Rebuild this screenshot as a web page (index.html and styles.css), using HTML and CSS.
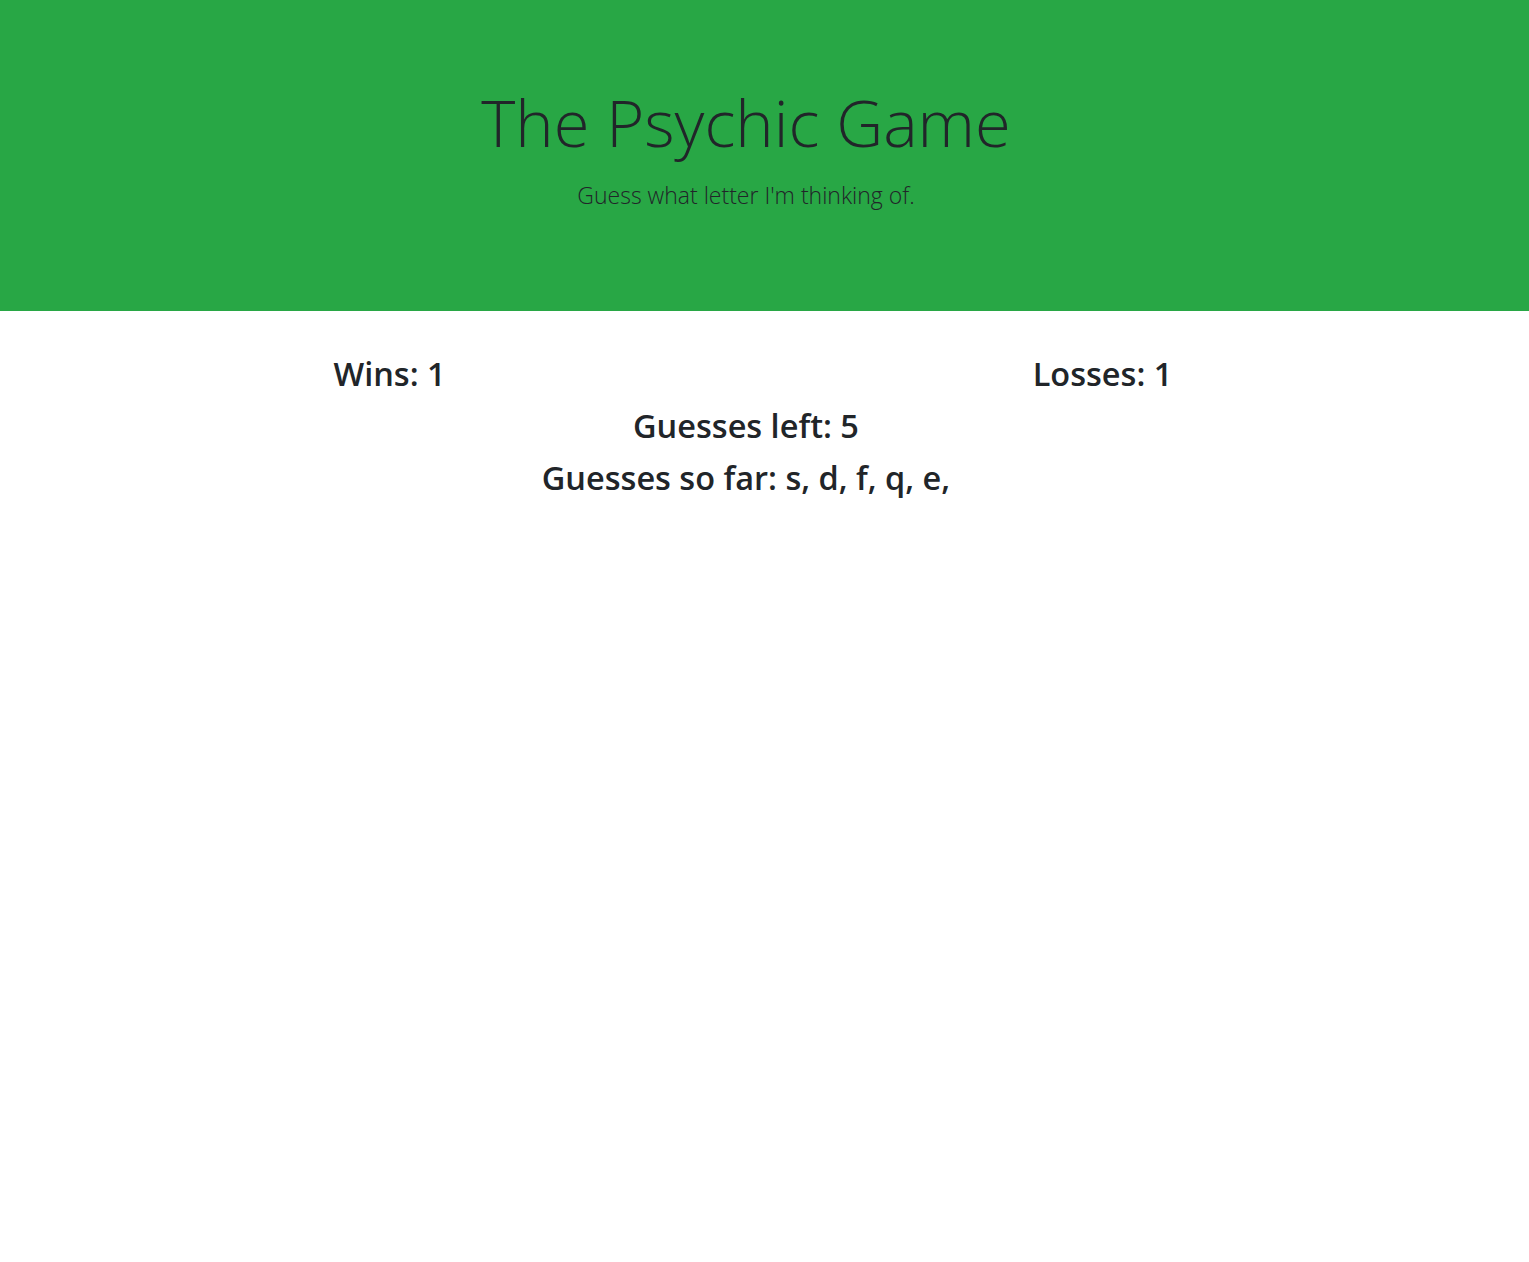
FILE: index.html
```html
<!DOCTYPE html>
<html lang="en">
<head>
<meta charset="utf-8">
<title>The Psychic Game</title>
<link rel="stylesheet" href="styles.css">
</head>
<body>
<header class="jumbotron">
  <div class="inner">
    <h1 class="title">The Psychic Game</h1>
    <p class="lead">Guess what letter I'm thinking of.</p>
  </div>
</header>
<main class="main">
  <div class="scores">
    <h2 class="stat">Wins: 1</h2>
    <h2 class="stat">Losses: 1</h2>
  </div>
  <h2 class="stat">Guesses left: 5</h2>
  <h2 class="stat">Guesses so far: s, d, f, q, e,</h2>
</main>
</body>
</html>
```
FILE: styles.css
```css
html, body {
  margin: 0;
  padding: 0;
  background: #fff;
  color: #212529;
  font-family: "Open Sans", "Noto Sans", "Liberation Sans", sans-serif;
}
.jumbotron {
  background: #28a745;
  height: 311px;
  box-sizing: border-box;
  padding-top: 82px;
  padding-right: 37px;
}
.inner {
  text-align: center;
}
.title {
  margin: 0;
  font-weight: 300;
  font-size: 65px;
  line-height: 80px;
}
.lead {
  margin: 18px 0 0;
  font-weight: 300;
  font-size: 23px;
  line-height: 30px;
}
.main {
  padding-top: 37px;
  padding-right: 37px;
  text-align: center;
}
.scores {
  width: 1426px;
  margin: 0 auto;
  display: grid;
  grid-template-columns: 1fr 1fr;
}
.stat {
  margin: 0;
  font-size: 32.5px;
  font-weight: 600;
  line-height: 52px;
}
```
